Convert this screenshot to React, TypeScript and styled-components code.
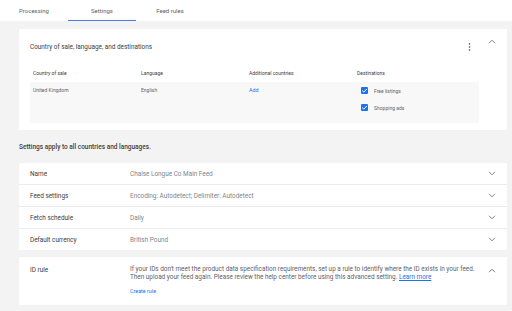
import React from 'react';
import styled, { createGlobalStyle } from 'styled-components';

const GlobalStyle = createGlobalStyle`
  html, body {
    margin: 0;
    padding: 0;
    background: #f3f3f3;
    font-family: Roboto, 'Noto Sans', Arial, sans-serif;
  }
`;

const Chevron = ({ up }: { up?: boolean }) => (
  <svg width="8" height="5" viewBox="0 0 8 5">
    <path
      d={up ? 'M1 4.2 L4 1.2 L7 4.2' : 'M1 0.8 L4 3.8 L7 0.8'}
      fill="none"
      stroke="#5f6368"
      strokeWidth="0.8"
    />
  </svg>
);

const Kebab = () => (
  <svg width="3" height="8" viewBox="0 0 3 8">
    <circle cx="1.5" cy="1" r="0.8" fill="#3c4043" />
    <circle cx="1.5" cy="4" r="0.8" fill="#3c4043" />
    <circle cx="1.5" cy="7" r="0.8" fill="#3c4043" />
  </svg>
);

const Check = () => (
  <CheckBox>
    <svg width="7" height="7" viewBox="0 0 7 7">
      <path d="M1.2 3.6 L2.8 5.1 L5.9 1.9" fill="none" stroke="#fff" strokeWidth="1" />
    </svg>
  </CheckBox>
);

const rows = [
  { label: 'Name', value: 'Chaise Longue Co Main Feed' },
  { label: 'Feed settings', value: 'Encoding: Autodetect; Delimiter: Autodetect' },
  { label: 'Fetch schedule', value: 'Daily' },
  { label: 'Default currency', value: 'British Pound' },
];

const App = () => {
  return (
    <Page>
      <GlobalStyle />
      <TabBar>
        <Tab>Processing</Tab>
        <Tab active>Settings</Tab>
        <Tab>Feed rules</Tab>
      </TabBar>
      <Content>
        <Card>
          <CardHeader>
            <CardTitle>Country of sale, language, and destinations</CardTitle>
            <Kebab />
            <HeaderChevron>
              <Chevron up />
            </HeaderChevron>
          </CardHeader>
          <Table>
            <HeadRow>
              <HeadCell>Country of sale</HeadCell>
              <HeadCell>Language</HeadCell>
              <HeadCell>Additional countries</HeadCell>
              <HeadCell>Destinations</HeadCell>
            </HeadRow>
            <BodyRow>
              <BodyCell>United Kingdom</BodyCell>
              <BodyCell>English</BodyCell>
              <BodyCell>
                <Link>Add</Link>
              </BodyCell>
              <DestCell>
                <DestItem>
                  <Check />
                  <span>Free listings</span>
                </DestItem>
                <DestItem>
                  <Check />
                  <span>Shopping ads</span>
                </DestItem>
              </DestCell>
            </BodyRow>
          </Table>
        </Card>

        <SectionNote>Settings apply to all countries and languages.</SectionNote>

        <RowList>
          {rows.map((r) => (
            <SettingRow key={r.label}>
              <RowLabel>{r.label}</RowLabel>
              <RowValue>{r.value}</RowValue>
              <Chevron />
            </SettingRow>
          ))}
        </RowList>

        <RuleCard>
          <RowLabel>ID rule</RowLabel>
          <RuleBody>
            <RuleText>
              If your IDs don't meet the product data specification requirements, set up a rule to
              identify where the ID exists in your feed. Then upload your feed again. Please review the
              help center before using this advanced setting. <Underlined>Learn more</Underlined>
            </RuleText>
            <Link>Create rule</Link>
          </RuleBody>
          <RuleChevron>
            <Chevron up />
          </RuleChevron>
        </RuleCard>
      </Content>
    </Page>
  );
};

export default App;

const Page = styled.div`
  width: 512px;
  height: 311px;
  overflow: hidden;
  background: #f3f3f3;
`;

const TabBar = styled.div`
  display: flex;
  height: 21px;
  background: #fff;
`;

const Tab = styled.div<{ active?: boolean }>`
  width: 68px;
  display: flex;
  align-items: center;
  justify-content: center;
  font-size: 6px;
  color: #5f6368;
  box-sizing: border-box;
  padding-top: 1px;
  border-bottom: 1.5px solid ${(p) => (p.active ? '#4a7be0' : 'transparent')};
`;

const Content = styled.div`
  padding: 8px 5px 0 19px;
  display: flex;
  flex-direction: column;
`;

const Card = styled.div`
  background: #fff;
  box-shadow: 0 0 0.5px rgba(0, 0, 0, 0.25);
  padding: 0 11px 7px 11px;
  display: flex;
  flex-direction: column;
`;

const CardHeader = styled.div`
  height: 35px;
  display: flex;
  align-items: center;
`;

const CardTitle = styled.div`
  flex: 1;
  font-size: 6.4px;
  color: #3c4043;
`;

const HeaderChevron = styled.div`
  display: flex;
  align-self: flex-start;
  margin: 10px 0 0 17px;
`;

const Table = styled.div`
  display: flex;
  flex-direction: column;
  margin-right: 17px;
`;

const HeadRow = styled.div`
  display: grid;
  grid-template-columns: 108px 108px 108px 1fr;
  height: 18px;
  align-items: center;
`;

const HeadCell = styled.div`
  font-size: 5px;
  color: #3c4043;
  padding-left: 3px;
`;

const BodyRow = styled.div`
  display: grid;
  grid-template-columns: 108px 108px 108px 1fr;
  height: 41px;
  background: #f8f8f8;
`;

const BodyCell = styled.div`
  font-size: 5px;
  color: #5f6368;
  padding: 5px 0 0 3px;
`;

const DestCell = styled.div`
  display: flex;
  flex-direction: column;
  gap: 10px;
  padding: 5px 0 0 7px;
`;

const DestItem = styled.div`
  display: flex;
  align-items: center;
  gap: 6px;
  font-size: 5px;
  color: #5f6368;
`;

const CheckBox = styled.div`
  width: 7px;
  height: 7px;
  background: #1a73e8;
  border-radius: 1px;
  display: flex;
`;

const Link = styled.span`
  color: #1a73e8;
  font-size: 5.4px;
`;

const Underlined = styled.span`
  color: #1a73e8;
  text-decoration: underline;
`;

const SectionNote = styled.div`
  font-size: 6.5px;
  font-weight: 500;
  color: #3c4043;
  height: 33px;
  display: flex;
  align-items: center;
`;

const RowList = styled.div`
  display: flex;
  flex-direction: column;
  gap: 1px;
  background: #ebebeb;
  box-shadow: 0 0 0.5px rgba(0, 0, 0, 0.25);
`;

const SettingRow = styled.div`
  height: 21px;
  background: #fff;
  display: flex;
  align-items: center;
  padding: 0 11px;
`;

const RowLabel = styled.div`
  width: 100px;
  font-size: 6.4px;
  color: #3c4043;
`;

const RowValue = styled.div`
  flex: 1;
  font-size: 6.4px;
  color: #80868b;
`;

const RuleCard = styled.div`
  margin-top: 7px;
  height: 48px;
  background: #fff;
  box-shadow: 0 0 0.5px rgba(0, 0, 0, 0.25);
  display: flex;
  align-items: flex-start;
  padding: 8px 11px 0 11px;
  box-sizing: border-box;

  ${RowLabel} {
    margin-top: 1px;
  }
`;

const RuleChevron = styled.div`
  display: flex;
  margin-top: 3px;
`;

const RuleBody = styled.div`
  flex: 1;
  display: flex;
  flex-direction: column;
  gap: 7px;
  padding-right: 8px;
`;

const RuleText = styled.div`
  font-size: 6.4px;
  line-height: 8px;
  color: #5f6368;
`;
